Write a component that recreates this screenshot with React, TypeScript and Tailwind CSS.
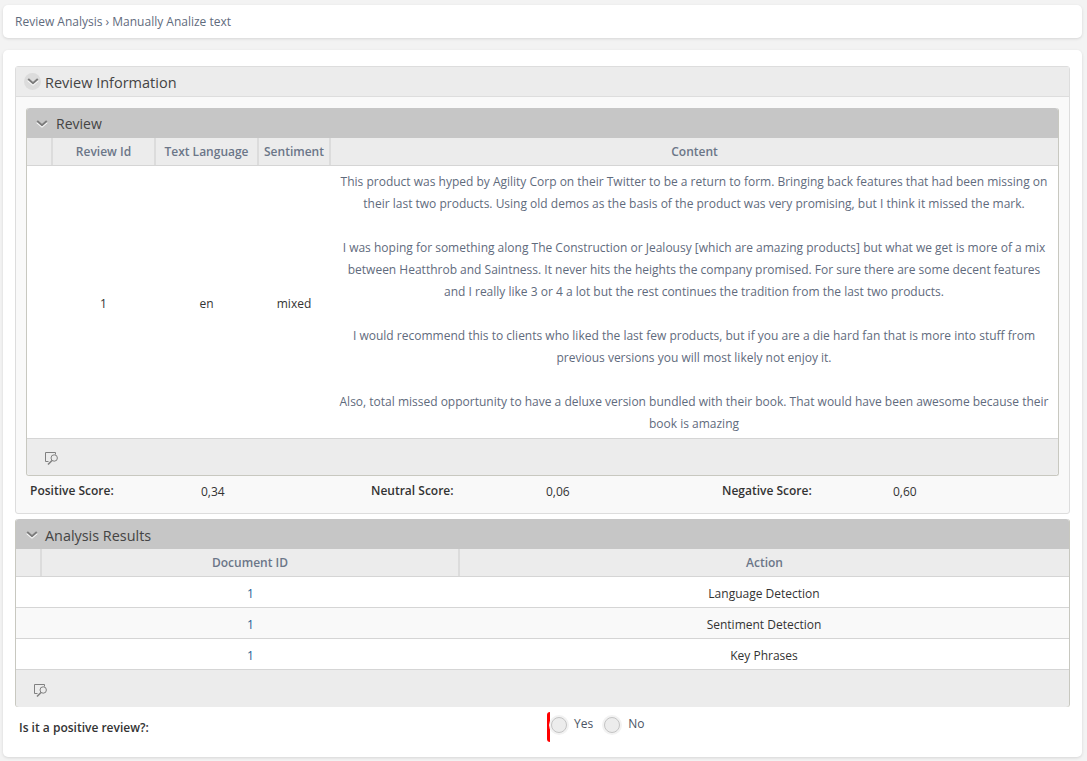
import React from "react";

const Chevron = ({ shift = "" }: { shift?: string }) => (
  <svg width="12" height="8" viewBox="0 0 12 8" fill="none" className={shift}>
    <path d="M1.2 2 L6 6.2 L10.8 2" stroke="#ffffff" strokeWidth="2.4" />
    <path d="M1.2 1 L6 5.2 L10.8 1" stroke="#7c7c7c" strokeWidth="2" />
  </svg>
);

const SearchBubble = () => (
  <svg width="14" height="14" viewBox="0 0 14 14" fill="none" stroke="#808080" strokeWidth="1">
    <path d="M3.5 9.5 H0.5 V0.5 H10.5 V2.5" />
    <circle cx="9.2" cy="6" r="3.2" />
    <path d="M7 8.5 L3 12.5" strokeWidth="1.6" />
  </svg>
);

const Paragraphs = [
  "This product was hyped by Agility Corp on their Twitter to be a return to form. Bringing back features that had been missing on their last two products. Using old demos as the basis of the product was very promising, but I think it missed the mark.",
  "I was hoping for something along The Construction or Jealousy [which are amazing products] but what we get is more of a mix between Heatthrob and Saintness. It never hits the heights the company promised. For sure there are some decent features and I really like 3 or 4 a lot but the rest continues the tradition from the last two products.",
  "I would recommend this to clients who liked the last few products, but if you are a die hard fan that is more into stuff from previous versions you will most likely not enjoy it.",
  "Also, total missed opportunity to have a deluxe version bundled with their book. That would have been awesome because their book is amazing",
];

const Th = ({ w, children }: { w: string; children?: React.ReactNode }) => (
  <div className={`${w} flex items-center justify-center border-r-2 border-[#dcdcdc] last:border-r-0 text-[12px] font-semibold text-[#6b7688]`}>
    {children}
  </div>
);

const Row = ({ action, alt }: { action: string; alt?: boolean }) => (
  <div className={`flex h-[31px] items-center border-b border-[#d5d5d5] pt-[3px] text-[12px] ${alt ? "bg-[#f9f9f9]" : "bg-white"}`}>
    <div className="w-[26px]" />
    <div className="w-[417px] text-center text-[#1f5f96]">1</div>
    <div className="flex-1 text-center text-[#333333]">{action}</div>
  </div>
);

const Radio = () => (
  <span className="inline-block h-[16px] w-[16px] rounded-full border border-[#c4c4c4] bg-[#ececec] shadow-[0_0_0_2px_#f2f2f2]" />
);

export default function App() {
  return (
    <div className="h-[761px] w-[1087px] overflow-hidden bg-[#f3f3f3] pl-[3px] pr-[5px] pt-[5px] font-['Open_Sans',sans-serif] text-[12px] text-[#333333]">
      <div className="flex h-[33px] items-center rounded-[5px] bg-white pl-[12px] text-[12px] text-[#5f6b7d] shadow-[0_1px_3px_rgba(0,0,0,0.12)]">
        Review Analysis › Manually Analize text
      </div>

      <div className="mt-[12px] h-[707px] rounded-[5px] bg-white px-[12px] pt-[16px] shadow-[0_1px_3px_rgba(0,0,0,0.12)]">
        <div className="h-[448px] rounded-[3px] border border-[#dddddd] bg-[#f9f9f9]">
          <div className="flex h-[30px] items-center border-b border-[#dddddd] bg-[#ececec] pl-[8px]">
            <span className="flex h-[17px] w-[17px] items-center justify-center rounded-full bg-[#dcdcdc]">
              <Chevron />
            </span>
            <span className="ml-[4px] pt-[4px] text-[14.5px] leading-none text-[#444444]">Review Information</span>
          </div>

          <div className="mx-[10px] mt-[11px] h-[368px] rounded-[3px] border-x border-b border-[#c8c8c0] bg-white">
            <div className="flex h-[30px] items-center rounded-t-[3px] bg-[#c6c6c6] pl-[9px]">
              <Chevron shift="mt-[2px]" />
              <span className="ml-[8px] pt-[2px] text-[14px] leading-none text-[#444444]">Review</span>
            </div>
            <div className="flex h-[28px] border-b border-[#d5d5d5] bg-[#ececec]">
              <Th w="w-[26px]" />
              <Th w="w-[103px]">Review Id</Th>
              <Th w="w-[103px]">Text Language</Th>
              <Th w="w-[72px]">Sentiment</Th>
              <Th w="flex-1">Content</Th>
            </div>
            <div className="flex h-[272px] items-center text-[12px]">
              <div className="w-[25px]" />
              <div className="w-[103px] pt-[3px] text-center text-[#333333]">1</div>
              <div className="w-[103px] pt-[3px] text-center text-[#333333]">en</div>
              <div className="w-[72px] pt-[3px] text-center text-[#333333]">mixed</div>
              <div className="flex flex-1 flex-col gap-[22px] px-[8px] pt-[2px] text-center leading-[22px] text-[#5f6b7d]">
                {Paragraphs.map((p, i) => (
                  <p key={i}>{p}</p>
                ))}
              </div>
            </div>
            <div className="flex h-[37px] items-center rounded-b-[3px] border-t border-[#d5d5d5] bg-[#ececec] pl-[18px] pt-[4px]">
              <SearchBubble />
            </div>
          </div>

          <div className="flex h-[28px] items-center pl-[14px] text-[12px]">
            <div className="w-[171px] pt-[1px] font-semibold text-[#333333]">Positive Score:</div>
            <div className="w-[170px] pt-[3px]">0,34</div>
            <div className="w-[175px] pt-[1px] font-semibold text-[#333333]">Neutral Score:</div>
            <div className="w-[176px] pt-[3px]">0,06</div>
            <div className="w-[171px] pt-[1px] font-semibold text-[#333333]">Negative Score:</div>
            <div className="pt-[3px]">0,60</div>
          </div>
        </div>

        <div className="mt-[5px] h-[188px] rounded-[3px] border-x border-b border-[#c8c8c0] bg-white">
          <div className="flex h-[30px] items-center rounded-t-[3px] bg-[#c6c6c6] pl-[10px]">
            <Chevron shift="mt-[2px]" />
            <span className="ml-[7px] pt-[4px] text-[14.4px] leading-none text-[#444444]">Analysis Results</span>
          </div>
          <div className="flex h-[28px] border-b border-[#d5d5d5] bg-[#ececec]">
            <Th w="w-[26px]" />
            <Th w="w-[418px]">Document ID</Th>
            <Th w="flex-1">Action</Th>
          </div>
          <Row action="Language Detection" />
          <Row action="Sentiment Detection" alt />
          <Row action="Key Phrases" />
          <div className="flex h-[37px] items-center rounded-b-[3px] bg-[#ececec] pl-[18px] pt-[4px]">
            <SearchBubble />
          </div>
        </div>

        <div className="flex h-[50px]">
          <div className="mt-[12px] w-[532px] pl-[4px] font-semibold text-[#333333]">Is it a positive review?:</div>
          <div className="mt-[5px] flex h-[30px] items-start">
            <span className="h-[30px] w-[3px] rounded-l-[3px] bg-[#ff0000]" />
            <div className="ml-[1px] mt-[4px] flex items-center">
              <Radio />
              <span className="ml-[7px] -translate-y-[1px] text-[#4b5565]">Yes</span>
              <span className="ml-[11px] flex"><Radio /></span>
              <span className="ml-[8px] -translate-y-[1px] text-[#4b5565]">No</span>
            </div>
          </div>
        </div>
      </div>
    </div>
  );
}
